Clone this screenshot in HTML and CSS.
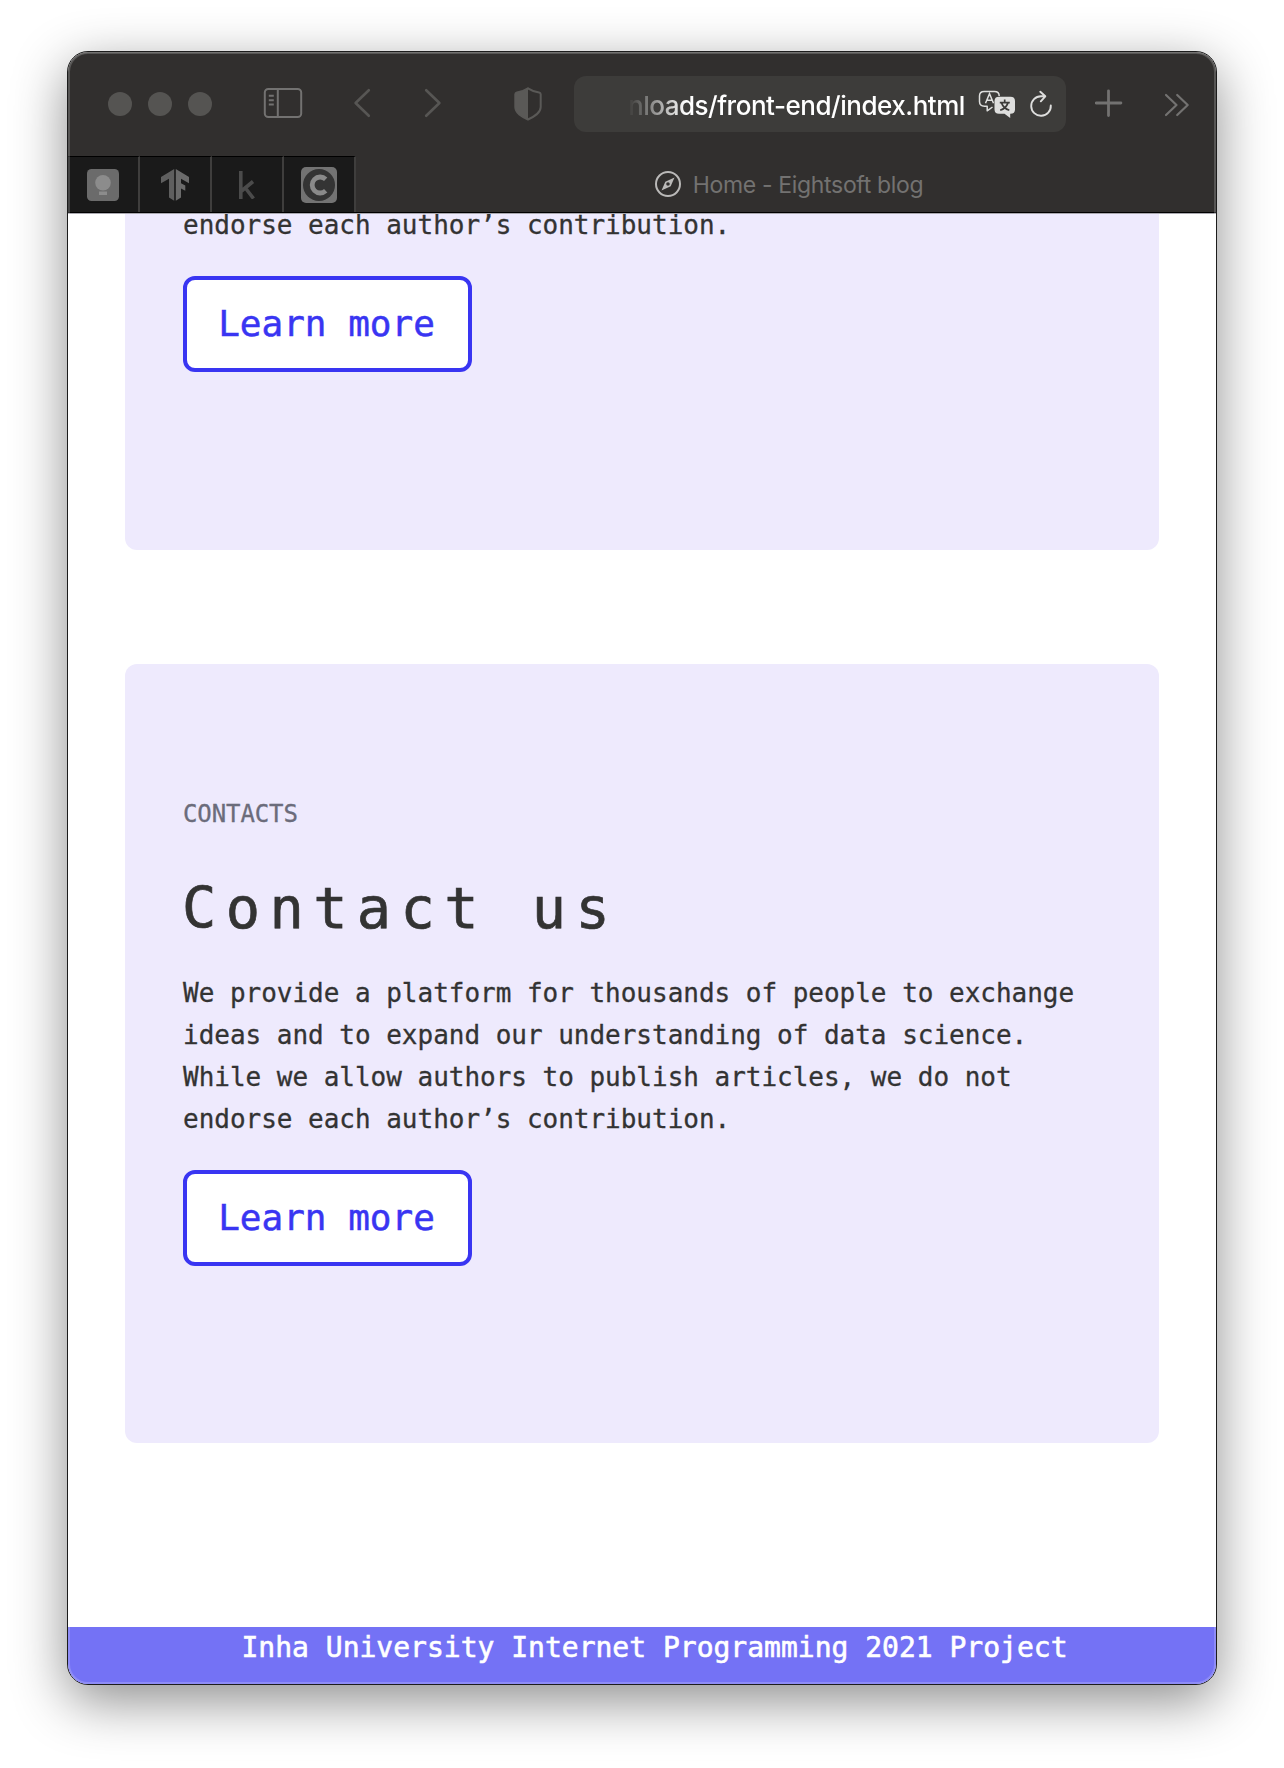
FILE: index.html
```html
<!DOCTYPE html>
<html lang="en">
<head>
<meta charset="utf-8">
<title>Home - Eightsoft blog</title>
<link rel="stylesheet" href="styles.css">
</head>
<body>
<div class="window">
  <header class="chrome">
    <div class="toolbar">
      <div class="lights"><i></i><i></i><i></i></div>
      <svg class="ic-sidebar" width="40" height="32" viewBox="0 0 40 32" fill="none" stroke="#737271" stroke-width="2"><rect x="1.8" y="2" width="36.4" height="28" rx="3.5"/><path d="M14.8 2v28M5.8 8.8h5M5.8 13.2h5M5.8 17.6h5"/></svg>
      <svg class="ic-back" width="18" height="30" viewBox="0 0 18 30" fill="none" stroke="#575654" stroke-width="2.6" stroke-linecap="round" stroke-linejoin="round"><path d="M15.8 2.2 2.6 15l13.2 12.8"/></svg>
      <svg class="ic-forward" width="18" height="30" viewBox="0 0 18 30" fill="none" stroke="#575654" stroke-width="2.6" stroke-linecap="round" stroke-linejoin="round"><path d="m2.2 2.2 13.2 12.8L2.2 27.8"/></svg>
      <svg class="ic-shield" width="28" height="34" viewBox="0 0 28 34"><path d="M14 1.3C10.5 3.6 6.500 5 2.900 5.400 1.900 5.600 1.300 6.100 1.300 7.200V20c0 6 6.500 9.500 12.700 12.500 6.200-3 12.700-6.500 12.700-12.500V7.200c0-1.100-.6-1.600-1.600-1.800C21.500 5 17.500 3.600 14 1.300Z" fill="none" stroke="#5a5957" stroke-width="2"/><path d="M14 1.300C10.500 3.600 6.500 5 2.900 5.400 1.900 5.600 1.300 6.100 1.300 7.200V20c0 6 6.500 9.500 12.700 12.500Z" fill="#5a5957"/></svg>
      <div class="address">
        <span class="url">nloads/front-end/index.html</span>
        <svg class="ic-translate" width="38" height="30" viewBox="0 0 38 30">
          <path d="M14.500 18 9.200 21.800V17.200H6.500Q1.500 17.200 1.500 12.500V7Q1.500 2.500 6.200 2.500H16.500Q21.200 2.500 21.200 7" fill="none" stroke="#dededd" stroke-width="1.500" stroke-linejoin="round"/>
          <path d="m7.500 14.300 4-9.500 4 9.500M8.900 11.300h5.200" fill="none" stroke="#dededd" stroke-width="1.500"/>
          <path d="M21 7.700H32.500Q37 7.700 37 12V20.500Q37 24.700 32.500 24.700H32.200V29L26.500 24.700H21Q16.500 24.700 16.500 20.500V12Q16.500 7.700 21 7.700Z" fill="#dededd"/>
          <path d="M26.700 10.500v3M21.800 13.600h10M30 13.900q-2 5.500-7.800 7.400M23.500 13.900q2 5.500 7.800 7.400" fill="none" stroke="#3d3c3a" stroke-width="1.700"/>
        </svg>
        <svg class="ic-reload" width="24" height="28" viewBox="0 0 24 28" fill="none" stroke="#dededd" stroke-width="1.900" stroke-linecap="round" stroke-linejoin="round"><path d="M21.800 15.500A9.800 9.800 0 1 1 12 6.200h4.300M11.300 1.700l5 4.600-4.500 5"/></svg>
      </div>
      <svg class="ic-plus" width="28" height="28" viewBox="0 0 28 28" stroke="#737271" stroke-width="2.800" stroke-linecap="round"><path d="M13.500 1.800v24.700M1.200 14h24.700"/></svg>
      <svg class="ic-more" width="26" height="24" viewBox="0 0 26 24" fill="none" stroke="#737271" stroke-width="2.200" stroke-linecap="round" stroke-linejoin="round"><path d="m2 2 10.500 10L2 22M13.200 2l10.500 10-10.500 10"/></svg>
    </div>
    <div class="tabbar">
      <div class="pin first"><svg width="32" height="32" viewBox="0 0 32 32"><rect width="32" height="32" rx="4.500" fill="#6b6b6b"/><circle cx="16" cy="13.800" r="7.800" fill="#8c8c8c"/><path d="M12 22.500h8V26h-8z" fill="#8c8c8c"/></svg></div>
      <div class="pin"><svg width="28" height="32" viewBox="0 0 28 32"><path d="M13.200 0 0 8v6.300l8-4.600V28.500l5.200 3.200Z" fill="#5f5f5f"/><path d="M14.800 0 28 8v6.300l-8-4.600v4.500l4.300 2.300v5.200L20 19.500v9l-5.200 3.200Z" fill="#6b6b6b"/></svg></div>
      <div class="pin"><svg width="18" height="28" viewBox="0 0 18 28" fill="none" stroke="#4b4b4b" stroke-width="3.600"><path d="M2.800 0v28M15 10.500 3.500 20M7 16.500l8.500 11"/></svg></div>
      <div class="pin"><svg width="36" height="36" viewBox="0 0 36 36"><rect width="36" height="36" rx="5" fill="#737373"/><circle cx="18" cy="18" r="16" fill="#343434"/><path d="M24.700 12.200a8 8 0 1 0 0 11.600" fill="none" stroke="#8a8a8a" stroke-width="4.800"/></svg></div>
      <div class="tab">
        <svg width="26" height="26" viewBox="0 0 26 26"><circle cx="13" cy="13" r="12" fill="none" stroke="#bab9b8" stroke-width="2"/><path fill-rule="evenodd" d="M19.500 6.500 15.700 15.200 6.500 19.500 10.300 10.800ZM13 11.200a1.800 1.800 0 1 0 0 3.600 1.800 1.800 0 0 0 0-3.600Z" fill="#bab9b8"/></svg>
        <span>Home - Eightsoft blog</span>
      </div>
    </div>
  </header>
  <main class="page">
    <section class="card card-scrolled">
      <p class="text">endorse each author’s contribution.</p>
      <a class="button">Learn more</a>
    </section>
    <section class="card card-contacts">
      <p class="label">CONTACTS</p>
      <h1 class="title">Contact us</h1>
      <p class="text">We provide a platform for thousands of people to exchange ideas and to expand our understanding of data science. While we allow authors to publish articles, we do not endorse each author’s contribution.</p>
      <a class="button">Learn more</a>
    </section>
  </main>
  <footer class="footer">Inha University Internet Programming 2021 Project</footer>
</div>
</body>
</html>
```
FILE: styles.css
```css
* { box-sizing: border-box; }
body {
  margin: 0;
  padding: 51px 67px 83px;
  height: 1768px;
  background: #fff;
  overflow: hidden;
}
svg { display: block; flex: none; }

.window {
  position: relative;
  display: flex;
  flex-direction: column;
  width: 1150px;
  height: 1634px;
  border: 1px solid #1c1c1c;
  border-radius: 21px;
  background: #fff;
  overflow: hidden;
  box-shadow: 0 16px 54px rgba(0, 0, 0, .45);
}
/* light rim along the inner edge of the window */
.window::after {
  content: "";
  position: absolute;
  inset: 0;
  border-radius: 20px;
  box-shadow: inset 0 0 0 2px rgba(255, 255, 255, .19), inset 0 1px 0 rgba(255, 255, 255, .16);
  pointer-events: none;
}

.chrome {
  flex: none;
  height: 162px;
  background: #312f2e;
  border-bottom: 1px solid #aaa9b0;
  font-family: Inter, "Liberation Sans", sans-serif;
}
.toolbar {
  display: flex;
  align-items: center;
  height: 104px;
  padding-left: 40px;
}
.lights { display: flex; gap: 16px; }
.lights i { width: 24px; height: 24px; border-radius: 50%; background: #555452; }
.ic-sidebar { margin-left: 51px; margin-top: -2px; }
.ic-back { margin-left: 50px; margin-top: -2px; }
.ic-forward { margin-left: 53px; margin-top: -2px; }
.ic-shield { margin-left: 72px; margin-top: -1px; }
.address {
  display: flex;
  align-items: center;
  width: 492px;
  height: 56px;
  margin-left: 32px;
  padding-left: 54px;
  border-radius: 12px;
  background: #3d3c3a;
}
.url {
  width: 338px;
  color: #fff;
  font-size: 26px;
  font-weight: 500;
  line-height: 56px;
  white-space: nowrap;
  letter-spacing: -.48px;
  padding-top: 4px;
  -webkit-mask-image: linear-gradient(90deg, transparent, #000 58px);
  mask-image: linear-gradient(90deg, transparent, #000 58px);
}
.ic-translate { margin-left: 12px; }
.ic-reload { margin-left: 13px; }
.ic-plus { margin-left: 29px; margin-top: -3px; }
.ic-more { margin-left: 41px; margin-top: 2px; }

.tabbar { display: flex; height: 57px; border-bottom: 1px solid #000; }
.pin {
  display: flex;
  align-items: center;
  justify-content: center;
  width: 72px;
  background: #1a1a1a;
  border-top: 1px solid #000;
  border-right: 2px solid #3f3e3d;
}
.pin.first { padding-right: 1px; }
.tab {
  flex: 1;
  display: flex;
  align-items: center;
  justify-content: center;
  gap: 12px;
  padding-left: 6px;
  color: #737271;
  font-size: 23px;
  letter-spacing: -.33px;
  white-space: nowrap;
}
.tab span { padding-top: 2px; }

.page {
  flex: none;
  height: 1413px;
  padding: 0 57px;
  overflow: hidden;
  font-family: "DejaVu Sans Mono", monospace;
  color: #333;
}
.card { padding: 0 58px; background: #eeeafd; overflow: hidden; }
.card-scrolled { height: 336px; border-radius: 0 0 12px 12px; }
.card-contacts { height: 779px; margin-top: 114px; padding-top: 130px; border-radius: 12px; }
.text {
  margin: 0;
  font-size: 26px;
  line-height: 42px;
  letter-spacing: -.02px;
  -webkit-text-stroke: .3px;
}
.card-scrolled .text { line-height: 22px; }
.card-scrolled .button { margin-top: 40px; }
.label {
  margin: 0;
  font-size: 24px;
  line-height: 40px;
  letter-spacing: -.1px;
  color: #6b6c7b;
  -webkit-text-stroke: .3px;
}
.title {
  margin: 34px 0 0 -1px;
  font-size: 57px;
  font-weight: 400;
  line-height: 80px;
  letter-spacing: 9.4px;
  -webkit-text-stroke: .7px;
}
.card-contacts .text { margin-top: 24px; }
.button {
  display: block;
  width: 289px;
  height: 96px;
  margin-top: 30px;
  padding-right: 2px;
  border: 4px solid #3935f2;
  border-radius: 12px;
  background: #fff;
  color: #3935f2;
  font-size: 36px;
  line-height: 88px;
  text-align: center;
  -webkit-text-stroke: .5px;
}
.footer {
  flex: 1;
  padding-left: 25px;
  background: #7472f5;
  color: #fff;
  font: 28px/42px "DejaVu Sans Mono", monospace;
  text-align: center;
  -webkit-text-stroke: .6px;
}
```
